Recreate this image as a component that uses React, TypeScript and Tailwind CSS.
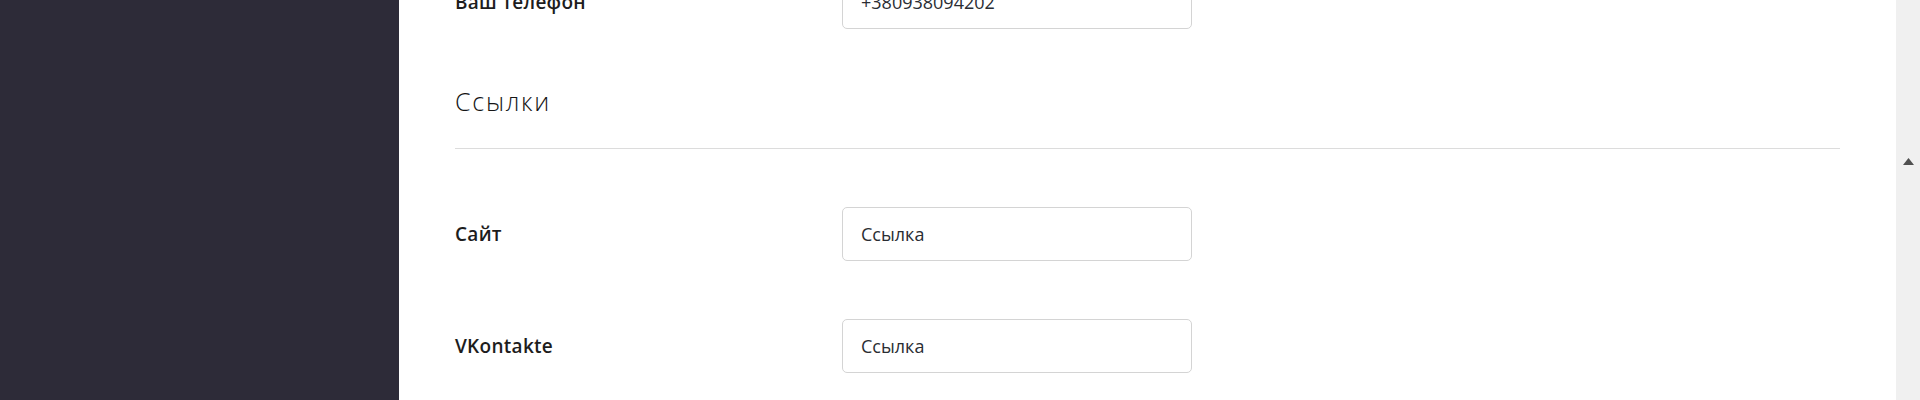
import React from "react";

function Row({ label, value }: { label: string; value: string }) {
  return (
    <div className="flex items-center">
      <div className="w-[387px] shrink-0 font-['Open_Sans',sans-serif] text-[19px] font-semibold tracking-[0.015em] text-[#1d1d1d]">
        {label}
      </div>
      <div className="flex h-[54px] w-[350px] items-center rounded-[5px] border border-[#d4d4d4] pl-[18px] font-['Open_Sans',sans-serif] text-[18px] text-[#2a2d33]">
        {value}
      </div>
    </div>
  );
}

export default function App() {
  return (
    <div className="flex h-[400px] w-full overflow-hidden bg-white">
      <aside className="w-[399px] shrink-0 bg-[#2d2b38]" />
      <main className="flex-1 px-14">
        <div className="mt-[-25px] flex flex-col">
          <Row label="Ваш телефон" value="+380938094202" />
          <h2 className="mt-[59px] font-['Open_Sans',sans-serif] text-[25px] font-light leading-[26px] tracking-[0.07em] text-[#151515]">
            Ссылки
          </h2>
          <hr className="mt-[34px] border-0 border-t border-[#dcdcdc]" />
          <div className="mt-[58px] flex flex-col gap-[58px]">
            <Row label="Сайт" value="Ссылка" />
            <Row label="VKontakte" value="Ссылка" />
          </div>
        </div>
      </main>
      <div className="flex w-[24px] shrink-0 justify-center bg-[#f0f0f0] pt-[158px]">
        <svg width="11" height="7" viewBox="0 0 11 7">
          <polygon points="5.5,0 11,7 0,7" fill="#505050" />
        </svg>
      </div>
    </div>
  );
}
